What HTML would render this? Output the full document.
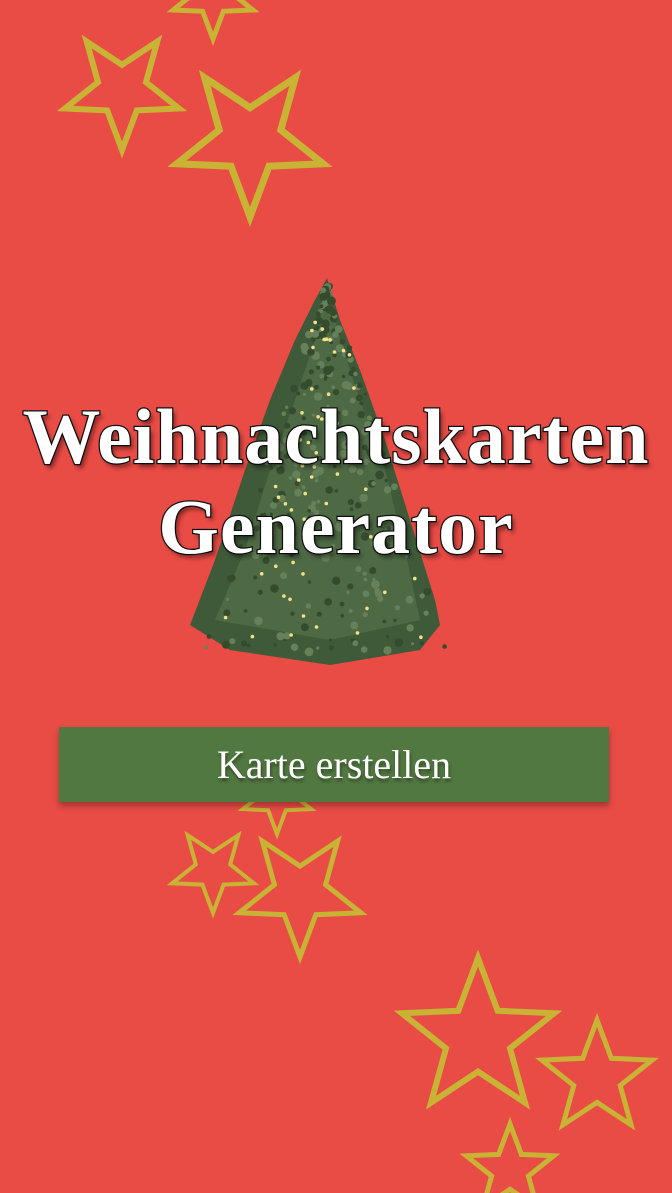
<!DOCTYPE html>
<html><head><meta charset="utf-8">
<style>
html,body{margin:0;padding:0;}
body{width:672px;height:1193px;background:#e94b45;position:relative;overflow:hidden;font-family:"Liberation Serif",serif;}
svg{position:absolute;left:0;top:0;}
.t{position:absolute;left:0;width:672px;text-align:center;color:#fff;font-weight:bold;font-size:78px;letter-spacing:1px;
-webkit-text-stroke:2.5px #111;paint-order:stroke fill;text-shadow:3px 4px 4px rgba(0,0,0,.45);line-height:1;}
.btn{position:absolute;left:59px;top:727px;width:550px;height:75px;background:#527841;box-shadow:0 4px 6px rgba(0,0,0,.3);
color:#fff;font-size:40px;text-align:center;line-height:75px;text-shadow:1px 3px 3px rgba(0,0,0,.4);}
</style></head><body>
<svg id="s" width="672" height="1193" viewBox="0 0 672 1193"></svg>
<div class="t" style="top:398px">Weihnachtskarten</div>
<div class="t" style="top:488px">Generator</div>
<div class="btn">Karte erstellen</div>
<script>
var s=document.getElementById('s'),h='';
function star(cx,cy,R,rot,w){var p=[];for(var i=0;i<10;i++){var r=i%2?R*0.42:R;var a=(rot+i*36)*Math.PI/180;p.push((cx+r*Math.cos(a)).toFixed(1)+','+(cy+r*Math.sin(a)).toFixed(1));}
h+='<polygon points="'+p.join(' ')+'" fill="none" stroke="#c8b335" stroke-width="'+w+'" stroke-linejoin="miter"/>';}
h+='<g>';
h+='<polygon points="327,278 340,320 360,370 385,440 410,520 435,600 440,625 420,650 330,665 230,650 190,625 215,560 245,470 270,400 295,340 315,300" fill="#3f5a38"/>';
h+='<polygon points="327,290 340,340 360,400 385,470 405,550 420,620 330,640 215,620 245,550 270,470 295,400 315,340" fill="#4e6a45"/>';
var seed=7;function rnd(){seed=(seed*9301+49297)%233280;return seed/233280;}
for(var i=0;i<300;i++){var y=285+rnd()*370;var half=(y-278)*0.33;var x=327+(rnd()*2-1)*half;
h+='<circle cx="'+x.toFixed(1)+'" cy="'+y.toFixed(1)+'" r="'+(1.5+rnd()*3).toFixed(1)+'" fill="'+(rnd()<.5?'#344b2e':'#66805a')+'"/>';}
for(var i=0;i<60;i++){var y=300+rnd()*340;var half=(y-278)*0.3;var x=327+(rnd()*2-1)*half;
h+='<circle cx="'+x.toFixed(1)+'" cy="'+y.toFixed(1)+'" r="1.8" fill="#f3e08a"/>';}
h+='</g>';
star(213,-3,42,90,5);
star(122,90,60,90,6);
star(250,140,77,90,7);
star(277,798,36,90,4);
star(213,870,43,90,4);
star(300,893,64,90,5);
star(478,1038,80,-90,6);
star(597,1078,58,-90,5);
star(510,1170,46,-90,5);
s.innerHTML=h;
</script>
</body></html>
